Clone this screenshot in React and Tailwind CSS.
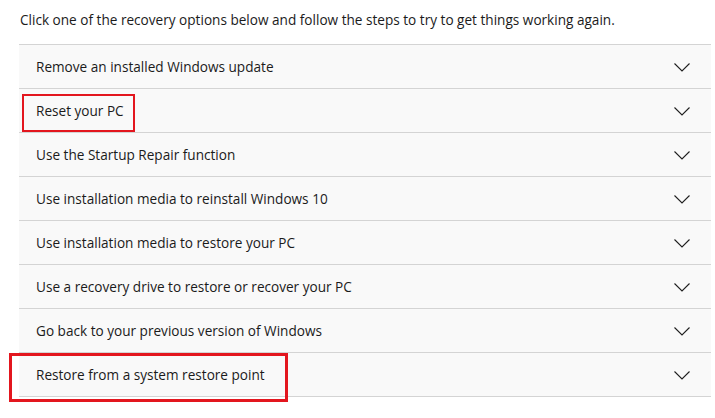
const OPTIONS = [
  "Remove an installed Windows update",
  "Reset your PC",
  "Use the Startup Repair function",
  "Use installation media to reinstall Windows 10",
  "Use installation media to restore your PC",
  "Use a recovery drive to restore or recover your PC",
  "Go back to your previous version of Windows",
  "Restore from a system restore point",
];

function Chevron() {
  return (
    <svg width="16" height="9" viewBox="0 0 16 9" fill="none" className="mt-[1px]">
      <path d="M0.5 0.5 L8 8 L15.5 0.5" stroke="#1f1f1f" strokeWidth="1.1" />
    </svg>
  );
}

export default function App() {
  return (
    <div
      className="relative w-[715px] h-[418px] overflow-hidden bg-white text-[#1b1b1b] text-[13.6px]"
      style={{ fontFamily: '"Segoe UI", "Open Sans", "Noto Sans", sans-serif' }}
    >
      {/* Intro */}
      <p className="h-[44px] pl-[20px] pt-[10px] leading-[20px]">
        Click one of the recovery options below and follow the steps to try to get things working again.
      </p>

      {/* Accordion */}
      <ul className="ml-[19px] w-[692px] border-t border-[#d4d4d4]">
        {OPTIONS.map((label) => (
          <li
            key={label}
            className="flex h-[44px] items-center justify-between border-b border-[#d4d4d4] bg-[#f9f9f9] pl-[17px] pr-[21px]"
          >
            <span className="pt-[2px]">{label}</span>
            <Chevron />
          </li>
        ))}
      </ul>

      {/* Highlight boxes */}
      <div className="absolute left-[22px] top-[94px] w-[113px] h-[38px] border-2 border-[#e3161e]" />
      <div className="absolute left-[9px] top-[353px] w-[279px] h-[49px] border-[3px] border-[#e3161e]" />
    </div>
  );
}
